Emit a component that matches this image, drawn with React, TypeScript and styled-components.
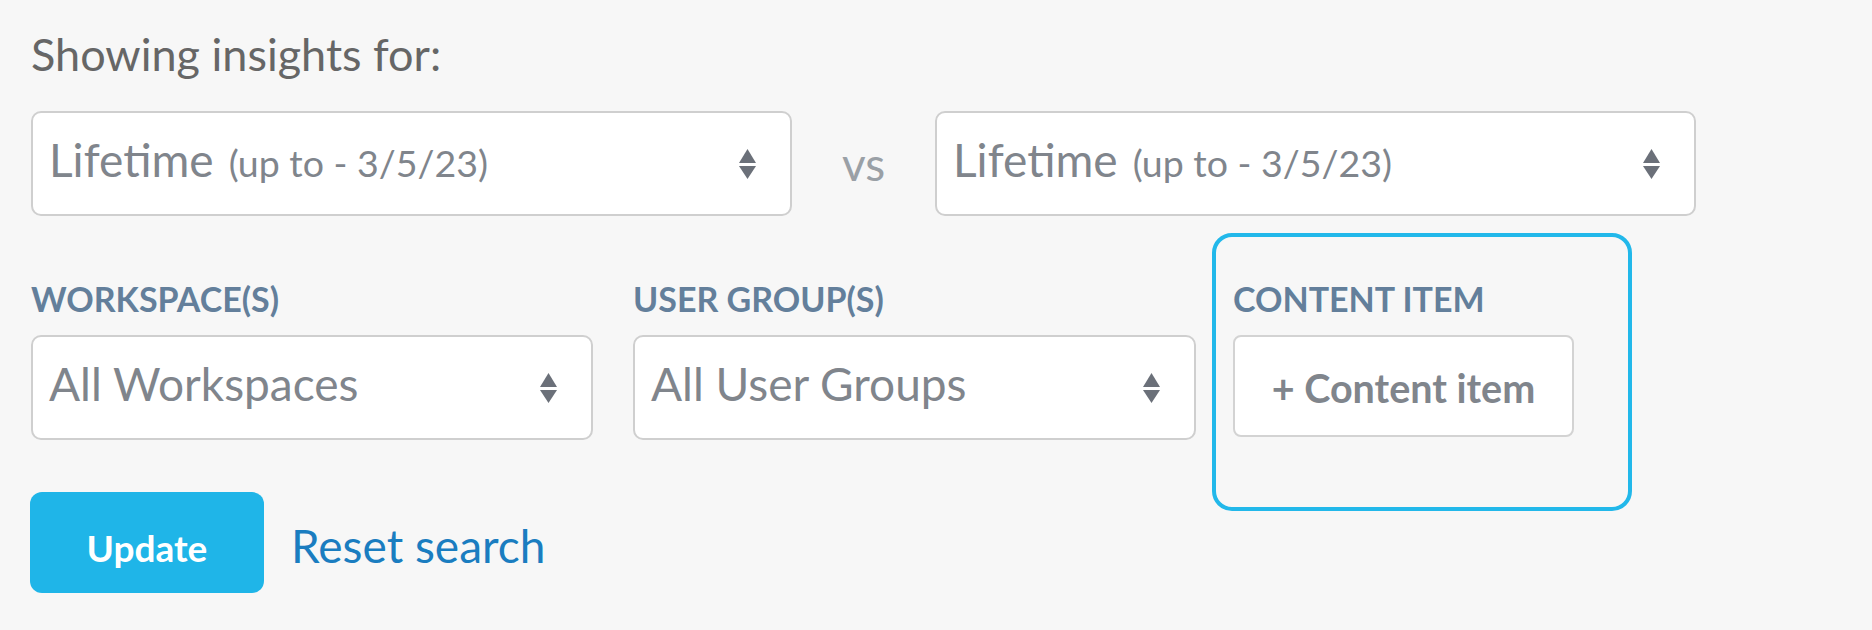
import React from "react";
import styled, { createGlobalStyle } from "styled-components";

const GlobalStyle = createGlobalStyle`
  html, body {
    margin: 0;
    padding: 0;
    background: #f7f7f7;
  }
  body {
    font-family: Lato, "Noto Sans", sans-serif;
  }
`;

const Page = styled.div`
  width: 1872px;
  height: 630px;
  box-sizing: border-box;
  padding: 26px 0 0 31px;
  background: #f7f7f7;
  overflow: hidden;
`;

const Heading = styled.h1`
  margin: 0;
  font-weight: 400;
  font-size: 45px;
  line-height: 56px;
  color: #666666;
`;

const CompareRow = styled.div`
  display: flex;
  align-items: center;
  margin-top: 29px;
`;

const SelectBox = styled.div<{ $width: number }>`
  box-sizing: border-box;
  width: ${(p) => p.$width}px;
  height: 105px;
  background: #ffffff;
  border: 2px solid #cfcfcf;
  border-radius: 10px;
  display: flex;
  align-items: center;
`;

const Value = styled.span`
  flex: 1;
  align-self: flex-start;
  margin-top: 19px;
  padding-left: 16px;
  font-size: 46px;
  line-height: 56px;
  color: #80858c;
  white-space: nowrap;
`;

const Sub = styled.span`
  font-size: 37.5px;
  margin-left: 15px;
`;

const Arrows = styled.svg`
  flex: none;
  margin-right: 34px;
`;

const Vs = styled.span`
  width: 143px;
  text-align: center;
  font-size: 46px;
  line-height: 56px;
  color: #9aa0a6;
`;

const FilterRow = styled.div`
  display: flex;
  align-items: flex-start;
  gap: 40px;
  margin-top: 62px;
`;

const Field = styled.div<{ $width: number }>`
  display: flex;
  flex-direction: column;
  width: ${(p) => p.$width}px;
`;

const HighlightField = styled(Field)`
  position: relative;
  margin-left: -3px;
  &::after {
    content: "";
    position: absolute;
    top: -45px;
    left: -21px;
    right: -58px;
    bottom: -74px;
    border: 4px solid #22b8ea;
    border-radius: 20px;
    pointer-events: none;
  }
`;

const Label = styled.div`
  font-size: 34px;
  font-weight: 700;
  line-height: 42px;
  color: #637f9b;
  text-transform: uppercase;
  margin-bottom: 15px;
  white-space: nowrap;
`;

const AddButton = styled.button`
  box-sizing: border-box;
  width: 341px;
  height: 102px;
  background: #ffffff;
  border: 2px solid #d3d3d3;
  border-radius: 8px;
  font-family: Lato, "Noto Sans", sans-serif;
  font-weight: 700;
  font-size: 39.5px;
  color: #80858c;
  display: flex;
  align-items: center;
  justify-content: center;
  padding: 2px 0 0;
`;

const Actions = styled.div`
  display: flex;
  align-items: center;
  gap: 27px;
  margin-top: 52px;
`;

const UpdateButton = styled.button`
  box-sizing: border-box;
  width: 234px;
  height: 101px;
  border: none;
  border-radius: 12px;
  background: #1fb5e8;
  color: #ffffff;
  font-family: Lato, "Noto Sans", sans-serif;
  font-weight: 700;
  font-size: 37px;
  padding: 9px 0 0;
  margin-left: -1px;
`;

const ResetLink = styled.a`
  font-size: 46px;
  line-height: 56px;
  padding-top: 6px;
  color: #1a7dc0;
  text-decoration: none;
`;

const SortArrows = () => (
  <Arrows width="17" height="30" viewBox="0 0 17 30">
    <path d="M8.5 0 L17 14 H0 Z" fill="#6b7079" />
    <path d="M0 17 H17 L8.5 30 Z" fill="#6b7079" />
  </Arrows>
);

const Select = ({ width, children }: { width: number; children: React.ReactNode }) => (
  <SelectBox $width={width}>
    <Value>{children}</Value>
    <SortArrows />
  </SelectBox>
);

export default function App() {
  return (
    <>
      <GlobalStyle />
      <Page>
        <Heading>Showing insights for:</Heading>
        <CompareRow>
          <Select width={761}>
            Lifetime<Sub>(up to - 3/5/23)</Sub>
          </Select>
          <Vs>vs</Vs>
          <Select width={761}>
            Lifetime<Sub>(up to - 3/5/23)</Sub>
          </Select>
        </CompareRow>
        <FilterRow>
          <Field $width={562}>
            <Label>Workspace(s)</Label>
            <Select width={562}>All Workspaces</Select>
          </Field>
          <Field $width={563}>
            <Label>User group(s)</Label>
            <Select width={563}>All User Groups</Select>
          </Field>
          <HighlightField $width={341}>
            <Label>Content item</Label>
            <AddButton>+ Content item</AddButton>
          </HighlightField>
        </FilterRow>
        <Actions>
          <UpdateButton>Update</UpdateButton>
          <ResetLink href="#">Reset search</ResetLink>
        </Actions>
      </Page>
    </>
  );
}
